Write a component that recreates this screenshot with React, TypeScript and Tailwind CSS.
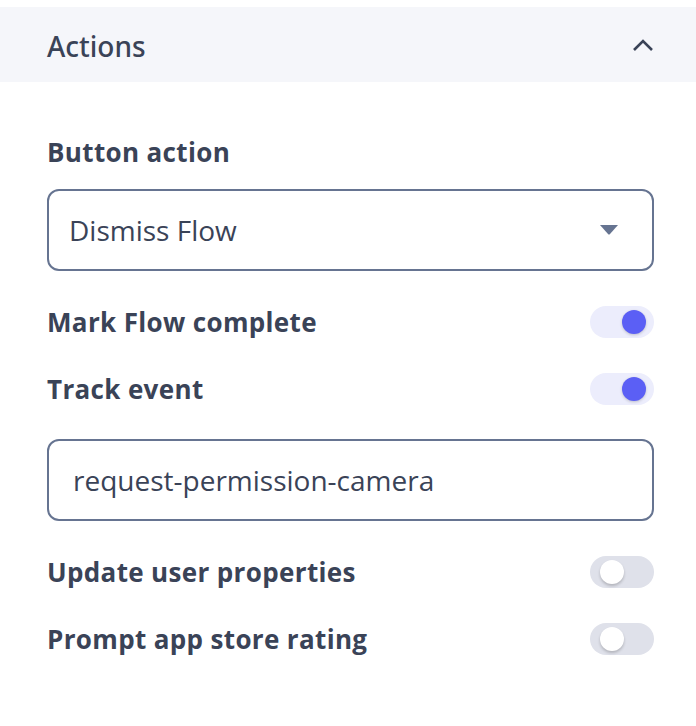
import React from "react";

function Toggle({ on }: { on: boolean }) {
  return (
    <div
      className={
        "relative w-[64px] h-[32px] rounded-full shrink-0 " +
        (on ? "bg-[#ecedfc]" : "bg-[#dfe1ea]")
      }
    >
      {on ? (
        <div className="absolute right-[8px] top-[4px] w-[24px] h-[24px] rounded-full bg-[#5b5ff5] shadow-[0_1px_3px_rgba(0,0,0,0.2)]" />
      ) : (
        <div className="absolute left-[10px] top-[4px] w-[24px] h-[24px] rounded-full bg-white shadow-[0_2px_3px_rgba(0,0,0,0.2)]" />
      )}
    </div>
  );
}

function Row({ label, on }: { label: string; on: boolean }) {
  return (
    <div className="flex items-center justify-between h-[32px]">
      <span className="text-[26px] font-bold text-[#3a4357] leading-[32px] tracking-[0.35px]">{label}</span>
      <Toggle on={on} />
    </div>
  );
}

export default function App() {
  return (
    <div
      className="w-[696px] h-[726px] bg-white pt-[7px]"
      style={{ fontFamily: "'Open Sans', 'Noto Sans', sans-serif" }}
    >
      <div className="h-[75px] bg-[#f5f6fa] flex items-center justify-between pl-[47px] pr-[42px]">
        <span
          className="text-[28px] text-[#3a4357] font-medium leading-[36px] mt-[2px]"
          style={{ fontFamily: "'Noto Sans', sans-serif" }}
        >
          Actions
        </span>
        <svg width="22" height="14" viewBox="0 0 22 14" fill="none">
          <path d="M2 12 L11 3 L20 12" stroke="#3a4357" strokeWidth="2.6" />
        </svg>
      </div>
      <div className="pl-[47px] pr-[42px] pt-[54px]">
        <div className="text-[26px] font-bold text-[#3a4357] leading-[32px] tracking-[0.35px]">Button action</div>
        <div className="mt-[21px] h-[82px] border-2 border-[#667491] rounded-[12px] flex items-center justify-between pl-[20px] pr-[34px]">
          <span className="text-[28px] text-[#3a4357] leading-[36px]">Dismiss Flow</span>
          <svg width="18" height="10" viewBox="0 0 18 10">
            <path d="M0 0 H18 L10 9 Q9 10 8 9 Z" fill="#667491" />
          </svg>
        </div>
        <div className="mt-[35px]">
          <Row label="Mark Flow complete" on={true} />
        </div>
        <div className="mt-[35px]">
          <Row label="Track event" on={true} />
        </div>
        <div className="mt-[34px] h-[82px] border-2 border-[#667491] rounded-[12px] flex items-center pl-[24px]">
          <span className="text-[28px] text-[#3a4357] leading-[36px]">request-permission-camera</span>
        </div>
        <div className="mt-[35px]">
          <Row label="Update user properties" on={false} />
        </div>
        <div className="mt-[35px]">
          <Row label="Prompt app store rating" on={false} />
        </div>
      </div>
    </div>
  );
}
